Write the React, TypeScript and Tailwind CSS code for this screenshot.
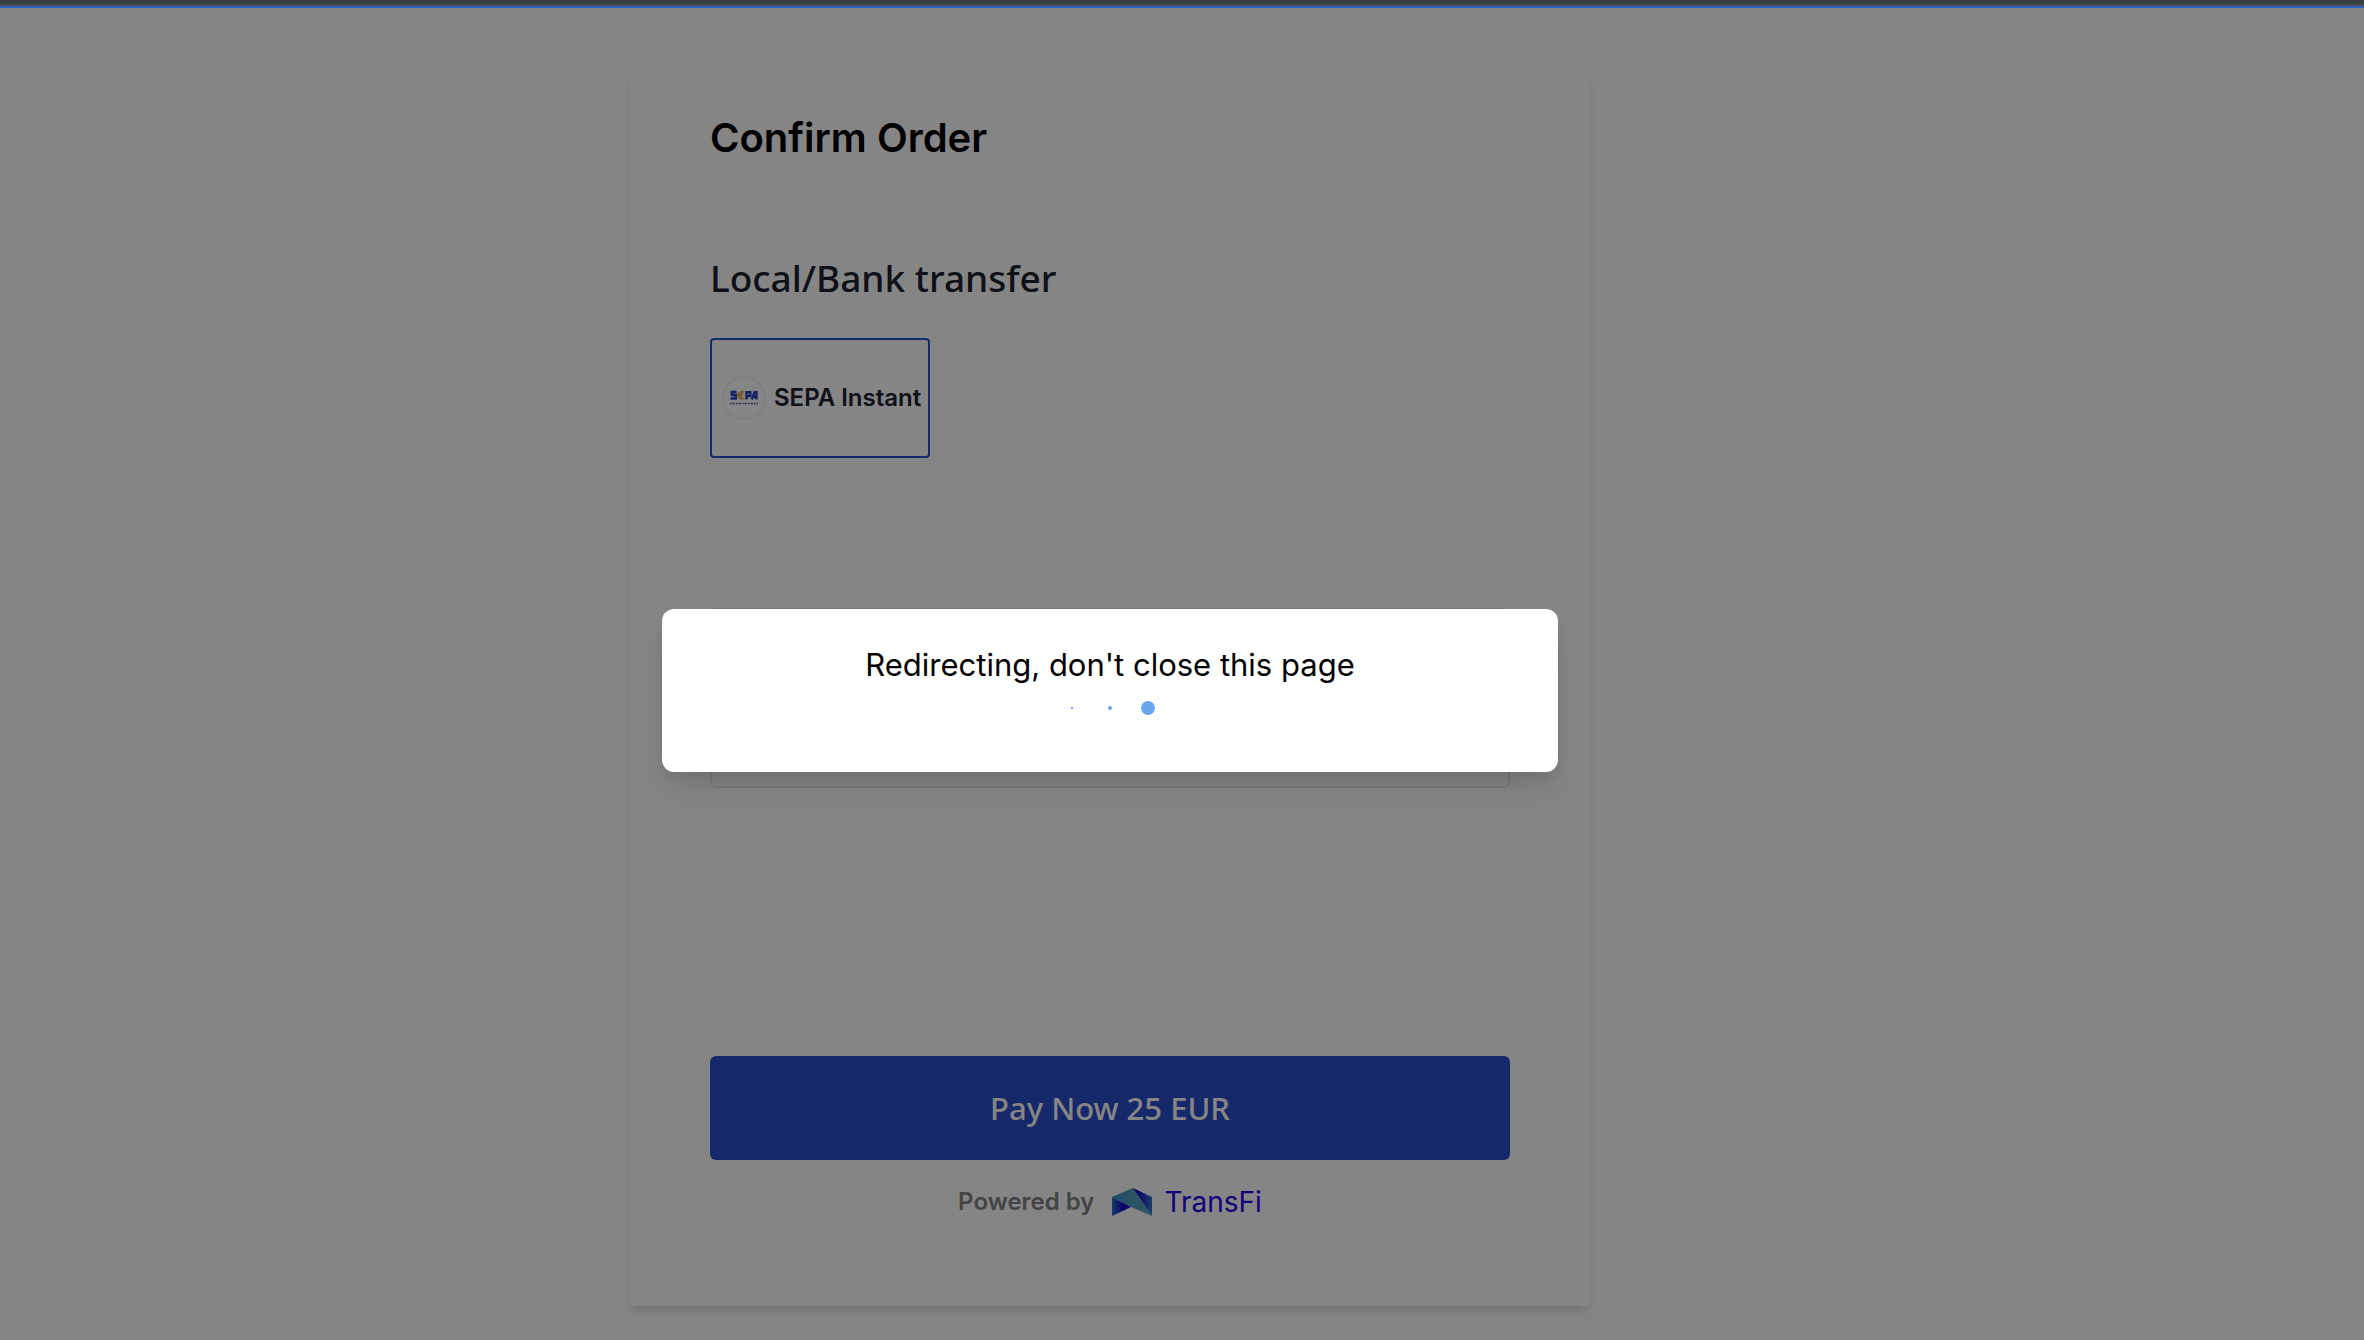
import type { ReactNode } from "react"

function SepaLogo() {
  return (
    <svg viewBox="0 0 44 44" className="size-11 shrink-0" aria-hidden="true">
      <circle cx="22" cy="22" r="21" fill="#fff" stroke="#f3f3f3" strokeWidth="2" />
      <g fill="none" stroke="#2541c4" strokeWidth="2.400">
        <path d="M14.500 16H9.800v3h4v3.500H8.500" />
        <path d="M24.500 23.500v-7.300h3.800v3.800h-3.800" />
        <path d="M29.800 23.500l2.700-7.300h2v7.300M31 21h3.500" />
      </g>
      <path d="M22 16.500a3.400 3.400 0 1 0 0 5.500M14.800 18.500h6M14.800 20.300h5" fill="none" stroke="#e0b050" strokeWidth="1.800" />
      <path d="M8 27.500h28" stroke="#55618f" strokeWidth="1.500" strokeDasharray="1.500 1 2.500 1" />
    </svg>
  )
}

function TransFiLogo() {
  return (
    <svg viewBox="0 0 42 28" className="h-7 w-[42px]" aria-hidden="true">
      <defs>
        <linearGradient id="tf-left" x1="0" x2="1">
          <stop offset="0" stopColor="#2a6fc8" />
          <stop offset="0.600" stopColor="#1700c8" />
        </linearGradient>
        <linearGradient id="tf-top" x1="0" x2="1">
          <stop offset="0" stopColor="#2f8fd6" />
          <stop offset="0.500" stopColor="#559fba" />
          <stop offset="1" stopColor="#55a5c0" />
        </linearGradient>
        <linearGradient id="tf-right" x1="0" x2="1">
          <stop offset="0.200" stopColor="#1700c8" />
          <stop offset="1" stopColor="#3a7ac8" />
        </linearGradient>
      </defs>
      <path d="M1 9v19l19-9z" fill="url(#tf-left)" />
      <path d="M1 9L22 0l19 28-21-9z" fill="url(#tf-top)" />
      <path d="M22 0l19 9v19z" fill="url(#tf-right)" />
    </svg>
  )
}

function Modal({ children }: { children: ReactNode }) {
  return (
    <div className="absolute inset-0 flex items-start justify-center bg-black/48 pt-[601px] pr-36">
      <div
        role="dialog"
        aria-label="Redirecting"
        className="flex h-[163px] w-full max-w-4xl flex-col items-center rounded-xl bg-white pt-8 shadow-[0_20px_30px_-6px_rgba(0,0,0,0.1),0_8px_12px_-4px_rgba(0,0,0,0.1)]"
      >
        {children}
      </div>
    </div>
  )
}

export default function App() {
  return (
    <div className="flex min-h-screen flex-col bg-white font-['Inter',sans-serif]">
      <div className="h-2 border-t-4 border-b-2 border-t-[#353f3f] border-b-[#2860c8] bg-[#4a4a4a]"></div>

      <div className="relative grow pr-36 pt-[66px] pb-[34px]">
        <main className="mx-auto flex max-w-[960px] flex-col rounded bg-white px-20 pt-10 pb-[86px] shadow-[0_8px_12px_-2px_rgba(0,0,0,0.1),0_4px_8px_-4px_rgba(0,0,0,0.1)]">
          <h1 className="text-[40px] leading-12 font-semibold text-black">Confirm Order</h1>

          <h2 className="mt-[92px] font-['Noto_Sans',sans-serif] text-[37px] leading-12 font-medium text-[#20222e]">
            Local/Bank transfer
          </h2>

          <button
            type="button"
            className="mt-9 flex h-[120px] w-[220px] items-center gap-2 rounded border-2 border-[#2a4dca] pl-2.5 text-2xl font-semibold whitespace-nowrap text-[#20222e]"
          >
            <SepaLogo />
            SEPA Instant
          </button>

          {/* payment details */}
          <div className="mt-[150px] h-[180px] rounded-md border-2 border-[#e5e7eb]"></div>

          <button
            type="button"
            className="mt-[268px] h-26 rounded-md bg-[#2a4dca] font-['Noto_Sans',sans-serif] text-[31px] font-medium text-white"
          >
            Pay Now 25 EUR
          </button>

          <div className="mt-6 flex h-9 items-center justify-center gap-4">
            <span className="text-2xl font-semibold text-[#828282]">Powered by</span>
            <a href="#" className="flex items-center gap-3 text-[28px] text-[#2200ea]">
              <TransFiLogo />
              TransFi
            </a>
          </div>
        </main>

        <Modal>
          <p className="text-[31px] leading-12 text-black">Redirecting, don't close this page</p>
          <div className="mt-3 flex h-3.5 items-center">
            <span className="flex w-[38px] justify-center">
              <span className="size-0.5 bg-[#6aa6ee]"></span>
            </span>
            <span className="flex w-[38px] justify-center">
              <span className="size-1 rounded-full bg-[#6aa6ee]"></span>
            </span>
            <span className="flex w-[38px] justify-center">
              <span className="size-3.5 rounded-full bg-[#6aa6ee]"></span>
            </span>
          </div>
        </Modal>
      </div>
    </div>
  )
}
